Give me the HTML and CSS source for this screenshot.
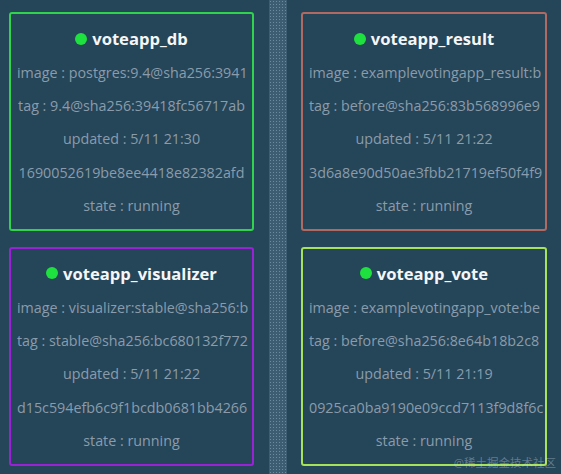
FILE: index.html
```html
<!DOCTYPE html>
<html lang="en">
<head>
    <meta charset="UTF-8">
    <meta name="viewport" content="width=device-width, initial-scale=1.0">
    <title>Swarm Visualizer</title>
    <link rel="stylesheet" href="styles.css">
</head>
<body>

    <div class="board">
        <div class="node node-left">
            <div class="service" style="--accent: #2fd44c;">
                <div class="service-name"><span class="dot"></span>voteapp_db</div>
                <div class="line">image : postgres:9.4@sha256:3941</div>
                <div class="line">tag : 9.4@sha256:39418fc56717ab</div>
                <div class="line">updated : 5/11 21:30</div>
                <div class="line">1690052619be8ee4418e82382afd</div>
                <div class="line">state : running</div>
            </div>

            <div class="service" style="--accent: #9a22d6;">
                <div class="service-name"><span class="dot"></span>voteapp_visualizer</div>
                <div class="line">image : visualizer:stable@sha256:b</div>
                <div class="line">tag : stable@sha256:bc680132f772</div>
                <div class="line">updated : 5/11 21:22</div>
                <div class="line">d15c594efb6c9f1bcdb0681bb4266</div>
                <div class="line">state : running</div>
            </div>
        </div>

        <div class="divider"></div>

        <div class="node node-right">
            <div class="service" style="--accent: #b06a62;">
                <div class="service-name"><span class="dot"></span>voteapp_result</div>
                <div class="line">image : examplevotingapp_result:b</div>
                <div class="line">tag : before@sha256:83b568996e9</div>
                <div class="line">updated : 5/11 21:22</div>
                <div class="line">3d6a8e90d50ae3fbb21719ef50f4f9</div>
                <div class="line">state : running</div>
            </div>

            <div class="service" style="--accent: #a6e25a;">
                <div class="service-name"><span class="dot"></span>voteapp_vote</div>
                <div class="line">image : examplevotingapp_vote:be</div>
                <div class="line">tag : before@sha256:8e64b18b2c8</div>
                <div class="line">updated : 5/11 21:19</div>
                <div class="line">0925ca0ba9190e09ccd7113f9d8f6c</div>
                <div class="line">state : running</div>
            </div>
        </div>
    </div>

    <div class="watermark">@稀土掘金技术社区</div>

</body>
</html>
```

FILE: styles.css
```css
/* Global Styles */
* {
    margin: 0;
    padding: 0;
    box-sizing: border-box;
}

body {
    background-color: #254559;
    font-family: "Open Sans", "Noto Sans CJK SC", sans-serif;
    color: #8a9cab;
    height: 100vh;
    overflow: hidden;
    position: relative;
}

.board {
    display: flex;
    height: 100%;
}

/* Node columns */
.node {
    display: flex;
    flex-direction: column;
    gap: 16px;
    padding-top: 12px;
}

.node-left {
    width: 269px;
    padding-left: 9px;
}

.node-right {
    flex: 1;
    padding-left: 14px;
}

.divider {
    width: 18px;
    background-color: #3d5e72;
    background-image: radial-gradient(circle, #6b8ba0 0.8px, transparent 1px);
    background-size: 3px 3px;
}

/* Service cards */
.service {
    width: 245px;
    border: 2px solid var(--accent);
    border-radius: 3px;
    padding: 7px 0;
    overflow: hidden;
}

.node-right .service {
    width: 246px;
}

.service-name {
    display: flex;
    align-items: center;
    justify-content: center;
    gap: 5px;
    height: 35px;
    font-size: 16.6px;
    font-weight: 700;
    color: #f4f6f7;
}

.dot {
    width: 12px;
    height: 12px;
    border-radius: 50%;
    background-color: #1ee03f;
}

.line {
    height: 33.2px;
    line-height: 33.2px;
    font-size: 14.3px;
    text-align: center;
    white-space: nowrap;
    padding: 0 6px;
}

/* Watermark */
.watermark {
    position: absolute;
    right: 5px;
    bottom: 4px;
    font-size: 11.5px;
    color: rgba(220, 228, 235, 0.35);
}
```
